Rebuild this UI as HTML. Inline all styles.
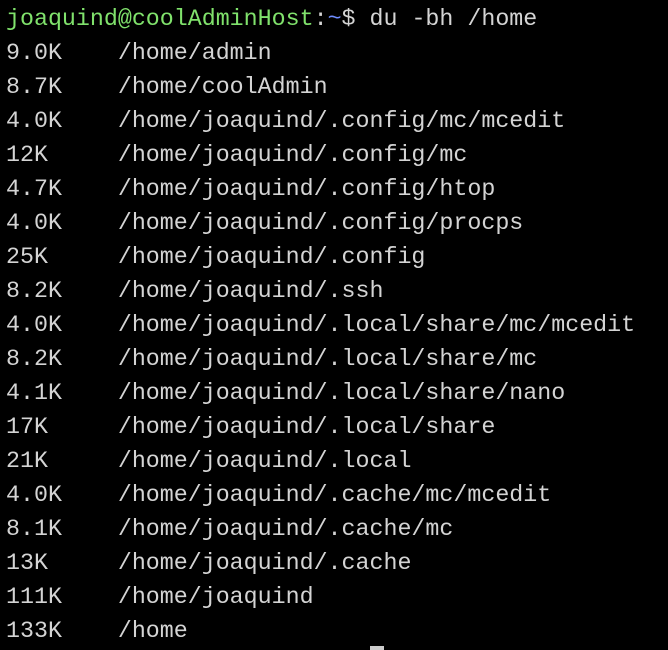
<!DOCTYPE html><html><head><style>
html,body{margin:0;background:#000;width:668px;height:650px;overflow:hidden}
pre{margin:0;padding:2px 0 0 6px;font-family:"Liberation Mono",monospace;font-size:23.3px;line-height:34px;color:#d4d4d4;}
.g{color:#80e26c}.b{color:#6f8cff}
.c{position:absolute;left:370px;top:646px;width:14px;height:4px;background:#ccc}
</style></head><body><pre><span class="g">joaquind@coolAdminHost</span>:<span class="b">~</span>$ du -bh /home
9.0K    /home/admin
8.7K    /home/coolAdmin
4.0K    /home/joaquind/.config/mc/mcedit
12K     /home/joaquind/.config/mc
4.7K    /home/joaquind/.config/htop
4.0K    /home/joaquind/.config/procps
25K     /home/joaquind/.config
8.2K    /home/joaquind/.ssh
4.0K    /home/joaquind/.local/share/mc/mcedit
8.2K    /home/joaquind/.local/share/mc
4.1K    /home/joaquind/.local/share/nano
17K     /home/joaquind/.local/share
21K     /home/joaquind/.local
4.0K    /home/joaquind/.cache/mc/mcedit
8.1K    /home/joaquind/.cache/mc
13K     /home/joaquind/.cache
111K    /home/joaquind
133K    /home</pre><div class="c"></div></body></html>
